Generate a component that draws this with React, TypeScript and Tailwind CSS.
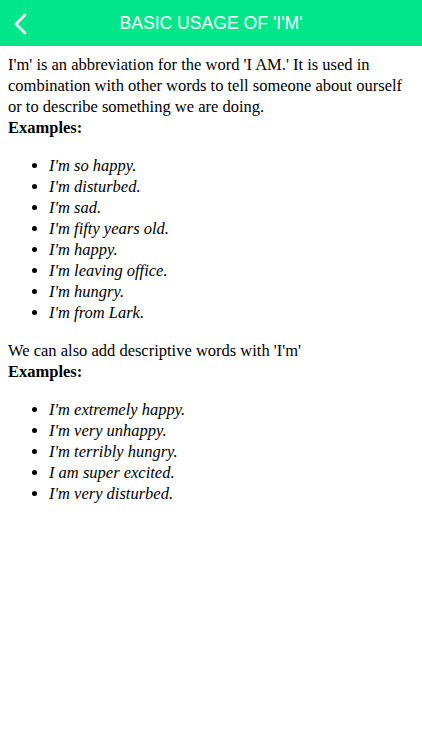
import React from "react";

const list1 = [
  "I'm so happy.",
  "I'm disturbed.",
  "I'm sad.",
  "I'm fifty years old.",
  "I'm happy.",
  "I'm leaving office.",
  "I'm hungry.",
  "I'm from Lark.",
];
const list2 = [
  "I'm extremely happy.",
  "I'm very unhappy.",
  "I'm terribly hungry.",
  "I am super excited.",
  "I'm very disturbed.",
];

function List({ items }: { items: string[] }) {
  return (
    <ul className="list-disc pl-[41px] my-[17px]">
      {items.map((t) => (
        <li key={t} className="italic">
          {t}
        </li>
      ))}
    </ul>
  );
}

export default function App() {
  return (
    <div className="w-[422px] h-[750px] bg-white">
      <div className="relative h-[46px] bg-[#00e688] flex items-center justify-center">
        <svg
          className="absolute left-[12px] top-[12px]"
          width="16"
          height="24"
          viewBox="0 0 16 24"
        >
          <path d="M13 3 L4 12 L13 21" stroke="white" strokeWidth="2.6" fill="none" strokeLinecap="round" strokeLinejoin="round" />
        </svg>
        <span className="text-white text-[17.6px] font-['Liberation_Sans',Arial,sans-serif]">
          BASIC USAGE OF 'I'M'
        </span>
      </div>
      <div className="px-[8px] pt-[8px] text-black text-[16.5px] leading-[21px] font-['Liberation_Serif','Times_New_Roman',serif]">
        <p>
          I'm' is an abbreviation for the word 'I AM.' It is used in combination with other words to tell someone about
          ourself or to describe something we are doing.
        </p>
        <p className="font-bold">Examples:</p>
        <List items={list1} />
        <p>We can also add descriptive words with 'I'm'</p>
        <p className="font-bold">Examples:</p>
        <List items={list2} />
      </div>
    </div>
  );
}
